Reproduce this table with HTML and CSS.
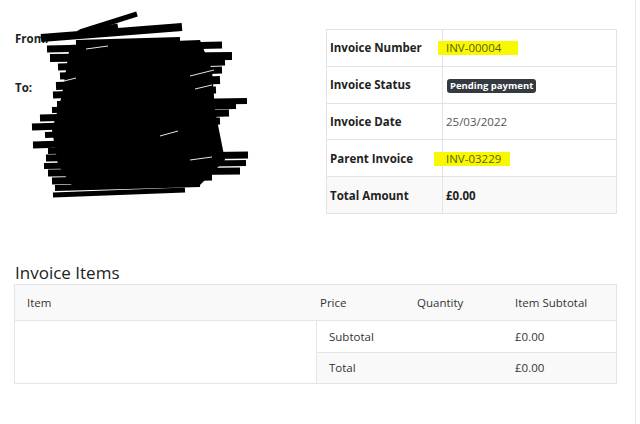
FILE: index.html
```html
<!DOCTYPE html>
<html lang="en">
<head>
<meta charset="utf-8">
<title>Invoice INV-00004</title>
<link rel="stylesheet" href="styles.css">
</head>
<body>
<div class="page">
  <section class="top">
    <div class="parties">
      <div class="party party-from"><span class="party-label">From:</span></div>
      <div class="party party-to"><span class="party-label">To:</span></div>
      <svg class="redact" width="260" height="210" viewBox="0 0 260 210" aria-hidden="true">
        <polygon points="70,45 200,40 212,70 215,110 225,160 200,185 75,190 58,165 52,130 62,95" fill="#000"/>
        <g stroke="#000" stroke-linecap="butt" fill="none">
          <path d="M80 32 L137 14" stroke-width="5"/>
          <path d="M78 34 L118 27" stroke-width="7"/>
          <path d="M41 38 L182 27" stroke-width="8"/>
          <path d="M76 43 L180 40" stroke-width="6"/>
          <path d="M47 49 L222 45" stroke-width="7"/>
          <path d="M50 58 L232 56" stroke-width="8"/>
          <path d="M58 67 L225 62" stroke-width="7"/>
          <path d="M60 76 L222 70" stroke-width="7"/>
          <path d="M56 86 L220 80" stroke-width="8"/>
          <path d="M53 95 L216 90" stroke-width="7"/>
          <path d="M57 104 L247 101" stroke-width="6"/>
          <path d="M52 110 L236 106" stroke-width="6"/>
          <path d="M40 118 L229 113" stroke-width="7"/>
          <path d="M32 127 L220 121" stroke-width="7"/>
          <path d="M45 135 L208 129" stroke-width="6"/>
          <path d="M33 145 L215 139" stroke-width="7"/>
          <path d="M48 151 L200 148" stroke-width="6"/>
          <path d="M46 158 L248 155" stroke-width="7"/>
          <path d="M44 166 L246 163" stroke-width="6"/>
          <path d="M48 173 L240 171" stroke-width="7"/>
          <path d="M52 181 L212 177" stroke-width="7"/>
          <path d="M55 188 L200 184" stroke-width="6"/>
          <path d="M53 195 L185 190" stroke-width="5"/>
        </g>
        <g stroke="#fff" stroke-width="0.9" fill="none">
          <path d="M86 49 L108 46"/>
          <path d="M190 76 L214 70"/>
          <path d="M195 89 L212 85"/>
          <path d="M160 136 L178 131"/>
          <path d="M64 81 L76 78"/>
          <path d="M190 160 L212 157"/>
        </g>
      </svg>
    </div>
    <table class="info">
      <tbody>
        <tr><th>Invoice Number</th><td><span class="marker marker-a">INV-00004</span></td></tr>
        <tr><th>Invoice Status</th><td><span class="badge">Pending payment</span></td></tr>
        <tr><th>Invoice Date</th><td>25/03/2022</td></tr>
        <tr><th>Parent Invoice</th><td><span class="marker marker-b">INV-03229</span></td></tr>
        <tr class="info-total"><th>Total Amount</th><td class="strong">£0.00</td></tr>
      </tbody>
    </table>
  </section>

  <h2 class="items-title">Invoice Items</h2>
  <div class="items">
    <div class="items-head">
      <div class="col col-item">Item</div>
      <div class="col col-price">Price</div>
      <div class="col col-qty">Quantity</div>
      <div class="col col-sub">Item Subtotal</div>
    </div>
    <div class="items-body">
      <div class="blank"></div>
      <div class="sums">
        <div class="sum-row"><div class="sum-label">Subtotal</div><div class="sum-value">£0.00</div></div>
        <div class="sum-row sum-total"><div class="sum-label">Total</div><div class="sum-value">£0.00</div></div>
      </div>
    </div>
  </div>
</div>
</body>
</html>
```

FILE: styles.css
```css
* { box-sizing: border-box; }
html, body { margin: 0; padding: 0; background: #fff; }
body {
  font-family: "Open Sans", "Noto Sans", sans-serif;
  font-size: 11.5px;
  color: #212529;
}
.page {
  width: 636px;
  min-height: 424px;
  border-right: 1px solid #e8e8e8;
  padding: 29px 18px 0 14px;
}
.top {
  display: flex;
  align-items: flex-start;
}
.parties {
  position: relative;
  flex: 1;
  height: 184px;
}
.party { height: 49px; padding-top: 2px; padding-left: 1px; }
.party-label { font-weight: 700; font-size: 11.5px; color: #222; }
.redact {
  position: absolute;
  left: -14px;
  top: -29px;
}
.info {
  width: 291px;
  border-collapse: collapse;
  border: 1px solid #e3e3e3;
}
.info th, .info td {
  border: 1px solid #e3e3e3;
  height: 36.8px;
  padding: 0 3px;
  text-align: left;
  vertical-align: middle;
  font-size: 11.5px;
}
.info th { width: 116px; font-weight: 700; color: #222; }
.info td { color: #555; }
.info td.strong { font-weight: 700; color: #222; }
.info-total th, .info-total td { background: #f9f9f9; }
.marker {
  position: relative;
  background: #f8f800;
  color: #5d5d12;
  display: inline-block;
  line-height: 14px;
}
.marker-a { margin-left: -8px; padding: 0 17px 0 8px; }
.marker-b { margin-left: -12px; padding: 0 9px 0 12px; }
.badge {
  display: inline-block;
  margin-left: 1px;
  background: #343a40;
  color: #fff;
  font-weight: 700;
  font-size: 9.5px;
  line-height: 14px;
  padding: 0 3px;
  border-radius: 3px;
}
.items-title {
  margin: 48px 0 0 1px;
  font-size: 17px;
  font-weight: 400;
  line-height: 22px;
  color: #222;
}
.items {
  border: 1px solid #e5e5e5;
  color: #333;
  font-size: 11.5px;
}
.items-head {
  display: flex;
  height: 36px;
  align-items: center;
  background: #f9f9f9;
  border-bottom: 1px solid #e5e5e5;
}
.col { padding-left: 12px; }
.col-item { width: 293px; }
.col-price { width: 97px; }
.col-qty { width: 98px; }
.col-sub { flex: 1; }
.items-body { display: flex; }
.blank { width: 302px; border-right: 1px solid #e5e5e5; }
.sums { flex: 1; }
.sum-row {
  display: flex;
  align-items: center;
  height: 31px;
}
.sum-row + .sum-row { border-top: 1px solid #e5e5e5; }
.sum-total { background: #f9f9f9; }
.sum-label { width: 186px; padding-left: 12px; }
.sum-value { flex: 1; padding-left: 12px; }
```
